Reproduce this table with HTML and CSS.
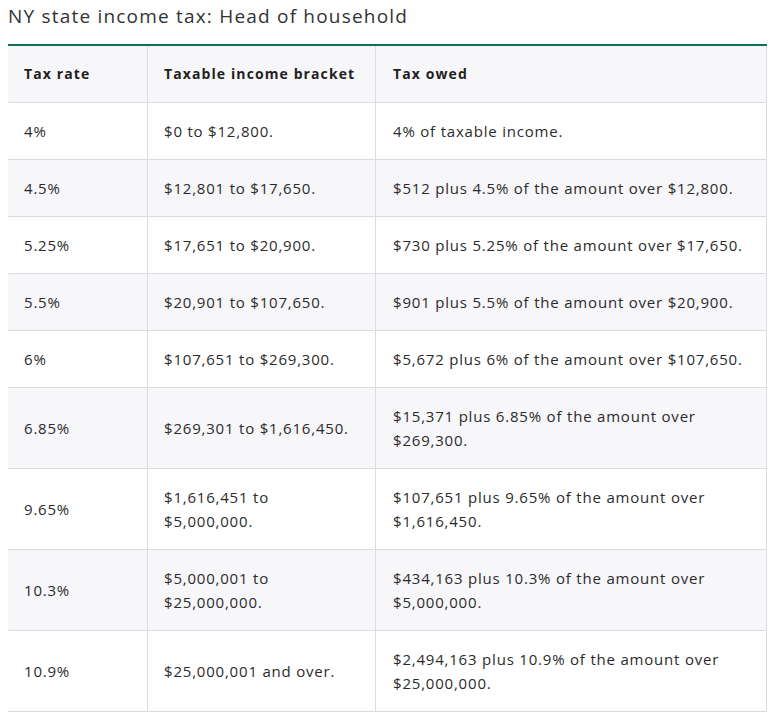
FILE: index.html
```html
<!DOCTYPE html>
<html>
<head>
<meta charset="utf-8">
<link rel="stylesheet" href="styles.css">
</head>
<body>
<h2 class="title">NY state income tax: Head of household</h2>
<table class="tax">
  <thead>
    <tr><th class="c1">Tax rate</th><th class="c2">Taxable income bracket</th><th class="c3">Tax owed</th></tr>
  </thead>
  <tbody>
    <tr><td>4%</td><td>$0 to $12,800.</td><td>4% of taxable income.</td></tr>
    <tr><td>4.5%</td><td>$12,801 to $17,650.</td><td>$512 plus 4.5% of the amount over $12,800.</td></tr>
    <tr><td>5.25%</td><td>$17,651 to $20,900.</td><td>$730 plus 5.25% of the amount over $17,650.</td></tr>
    <tr><td>5.5%</td><td>$20,901 to $107,650.</td><td>$901 plus 5.5% of the amount over $20,900.</td></tr>
    <tr><td>6%</td><td>$107,651 to $269,300.</td><td>$5,672 plus 6% of the amount over $107,650.</td></tr>
    <tr><td>6.85%</td><td>$269,301 to $1,616,450.</td><td>$15,371 plus 6.85% of the amount over<br>$269,300.</td></tr>
    <tr><td>9.65%</td><td>$1,616,451 to<br>$5,000,000.</td><td>$107,651 plus 9.65% of the amount over<br>$1,616,450.</td></tr>
    <tr><td>10.3%</td><td>$5,000,001 to<br>$25,000,000.</td><td>$434,163 plus 10.3% of the amount over<br>$5,000,000.</td></tr>
    <tr><td>10.9%</td><td>$25,000,001 and over.</td><td>$2,494,163 plus 10.9% of the amount over<br>$25,000,000.</td></tr>
  </tbody>
</table>
</body>
</html>
```
FILE: styles.css
```css
body {
  margin: 8px;
  font-family: "Open Sans", "Liberation Sans", sans-serif;
  color: #2b2b2b;
  background: #fff;
}
.title {
  margin: 0;
  font-size: 19px;
  font-weight: 400;
  line-height: 16px;
  letter-spacing: 1.2px;
  color: #333;
}
.tax {
  margin-top: 20px;
  margin-left: -1px;
  width: 760px;
  border-collapse: collapse;
  table-layout: fixed;
  border-top: 2px solid #0a7255;
  font-size: 15px;
  line-height: 24px;
  letter-spacing: 0.8px;
}
.tax th, .tax td {
  border: 1px solid #dcdbe0;
  padding: 16px 16px;
  text-align: left;
  vertical-align: middle;
  white-space: nowrap;
}
.tax thead th {
  border-top: none;
  background: #f7f6f9;
  font-weight: 700;
  font-size: 14px;
  letter-spacing: 1.1px;
  color: #1f1f1f;
}
.c1 { width: 107px; }
.c2 { width: 195px; }
.tax tbody tr:nth-child(even) td { background: #f7f6f9; }
.tax td:last-child, .tax th:last-child { padding-left: 17px; }
```
